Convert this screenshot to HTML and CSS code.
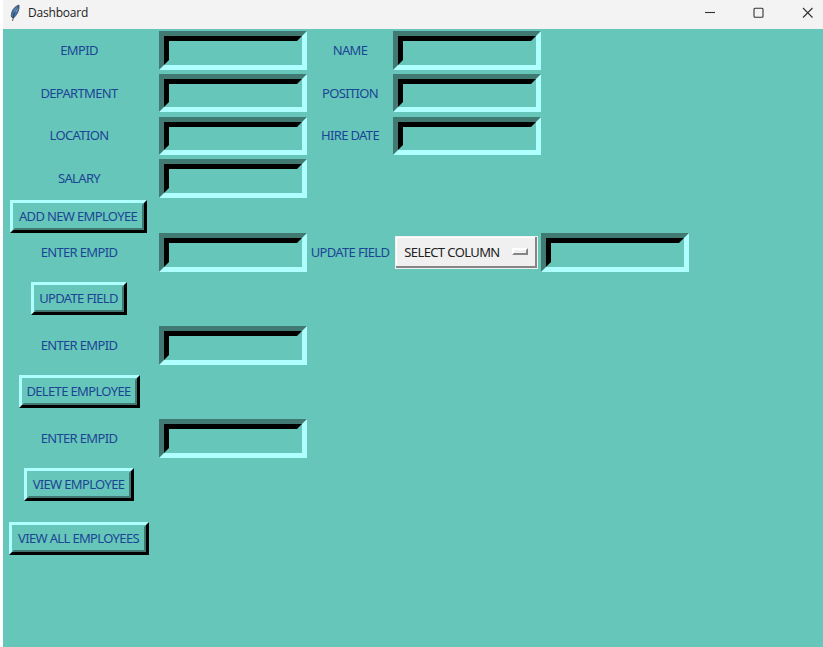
FILE: index.html
```html
<!DOCTYPE html>
<html lang="en">
<head>
<meta charset="utf-8">
<title>Dashboard</title>
<link rel="stylesheet" href="styles.css">
</head>
<body>
<header class="titlebar">
  <svg class="feather" width="12" height="18" viewBox="0 0 12 18"><path d="M2.5 13C1.5 8 5 2.5 10 1C10.5 5 9 10 4.5 14Z" fill="#3f75b0" stroke="#3b4652" stroke-width=".8"/><path d="M5 9Q5.500 5 9 2.500L8 7Z" fill="#8fbce8"/><path d="M9 2.500Q4.500 8 3.500 17" fill="none" stroke="#293340" stroke-width=".8"/></svg>
  <h1 class="title">Dashboard</h1>
  <svg class="controls" width="112" height="12" viewBox="0 0 112 12" fill="none" stroke="#333" stroke-width="1.1"><path d="M0 5.5H10"/><rect x="49" y="1.2" width="9" height="9" rx="1"/><path d="M98 1L107.5 10.5M107.5 1L98 10.5"/></svg>
</header>
<main class="form">
  <div class="row"><label class="label">EMPID</label><div class="entry"><input></div><label class="label">NAME</label><div class="entry"><input></div></div>
  <div class="row"><label class="label">DEPARTMENT</label><div class="entry"><input></div><label class="label">POSITION</label><div class="entry"><input></div></div>
  <div class="row"><label class="label">LOCATION</label><div class="entry"><input></div><label class="label">HIRE DATE</label><div class="entry"><input></div></div>
  <div class="row"><label class="label">SALARY</label><div class="entry"><input></div></div>
  <div class="row row-add"><button class="button add">ADD NEW EMPLOYEE</button></div>
  <div class="row row-entry"><label class="label">ENTER EMPID</label><div class="entry"><input></div><label class="label">UPDATE FIELD</label><button class="option">SELECT COLUMN<span class="indicator"></span></button><div class="entry"><input></div></div>
  <div class="row row-action"><button class="button update">UPDATE FIELD</button></div>
  <div class="row row-entry"><label class="label">ENTER EMPID</label><div class="entry"><input></div></div>
  <div class="row row-action"><button class="button delete">DELETE EMPLOYEE</button></div>
  <div class="row row-entry"><label class="label">ENTER EMPID</label><div class="entry"><input></div></div>
  <div class="row row-action"><button class="button view">VIEW EMPLOYEE</button></div>
  <div class="row row-action"><button class="button all">VIEW ALL EMPLOYEES</button></div>
</main>
</body>
</html>
```
FILE: styles.css
```css
* { box-sizing: border-box; }
body {
  margin: 0;
  height: 647px;
  padding-left: 3px;
  overflow: hidden;
  background: #fff;
  font: 13px/16px "Noto Sans", sans-serif;
  color: #1b4594;
}
.titlebar {
  display: flex;
  align-items: center;
  height: 29px;
  padding: 0 6px 3px 6px;
  background: #f3f3f3;
}
.title {
  margin: 0 auto 0 7px;
  font: 12px/16px "Open Sans", sans-serif;
  letter-spacing: -0.2px;
  color: #222;
}
.form { height: 618px; background: #67c6ba; }
.row {
  display: grid;
  grid-template-columns: 156px 148.5px 85px 148.5px 148.5px;
  align-items: center;
  justify-items: center;
  height: 42.75px;
}
.row-add { height: 33px; }
.row-entry { height: 39px; }
.row-action { height: 53.9px; }
.label { white-space: nowrap; margin-right: 4px; padding-bottom: 1px; letter-spacing: -0.65px; }
.label:nth-child(3) { margin-right: 0; }
.entry {
  width: 148px;
  height: 38.5px;
  border: 5px solid;
  border-color: #417a72 #b0ffff #b0ffff #417a72;
}
.entry input {
  display: block;
  width: 100%;
  height: 100%;
  padding: 0;
  border: 5px solid;
  border-color: #000 #67c6ba #67c6ba #000;
  background: #67c6ba;
  outline: 0;
}
.button {
  position: relative;
  height: 33px;
  padding: 0 1px 2px 0;
  margin-right: 4px;
  border: 3px solid;
  border-color: #b0ffff #000 #000 #b0ffff;
  background: #67c6ba;
  font: inherit;
  letter-spacing: -0.65px;
  white-space: nowrap;
  color: inherit;
}
.button::after {
  content: "";
  position: absolute;
  inset: 0;
  border: 2px solid;
  border-color: transparent #417a72 #417a72 transparent;
}
.add { width: 137px; margin-right: 5px; }
.update { width: 96px; }
.delete { width: 121px; }
.view { width: 110px; }
.all { width: 140px; }
.option {
  display: flex;
  align-items: center;
  justify-content: space-between;
  width: 143px;
  height: 33px;
  padding: 0 9px 2px 8px;
  border: 1px solid #eef2f1;
  box-shadow: inset -2px -2px #858585, inset 1px 1px #fff;
  background: #f0f0f0;
  font: inherit;
  letter-spacing: -0.6px;
  color: #222;
}
.indicator {
  width: 16px;
  height: 7px;
  border: 2px solid;
  border-color: #fff #858585 #858585 #fff;
}
```
